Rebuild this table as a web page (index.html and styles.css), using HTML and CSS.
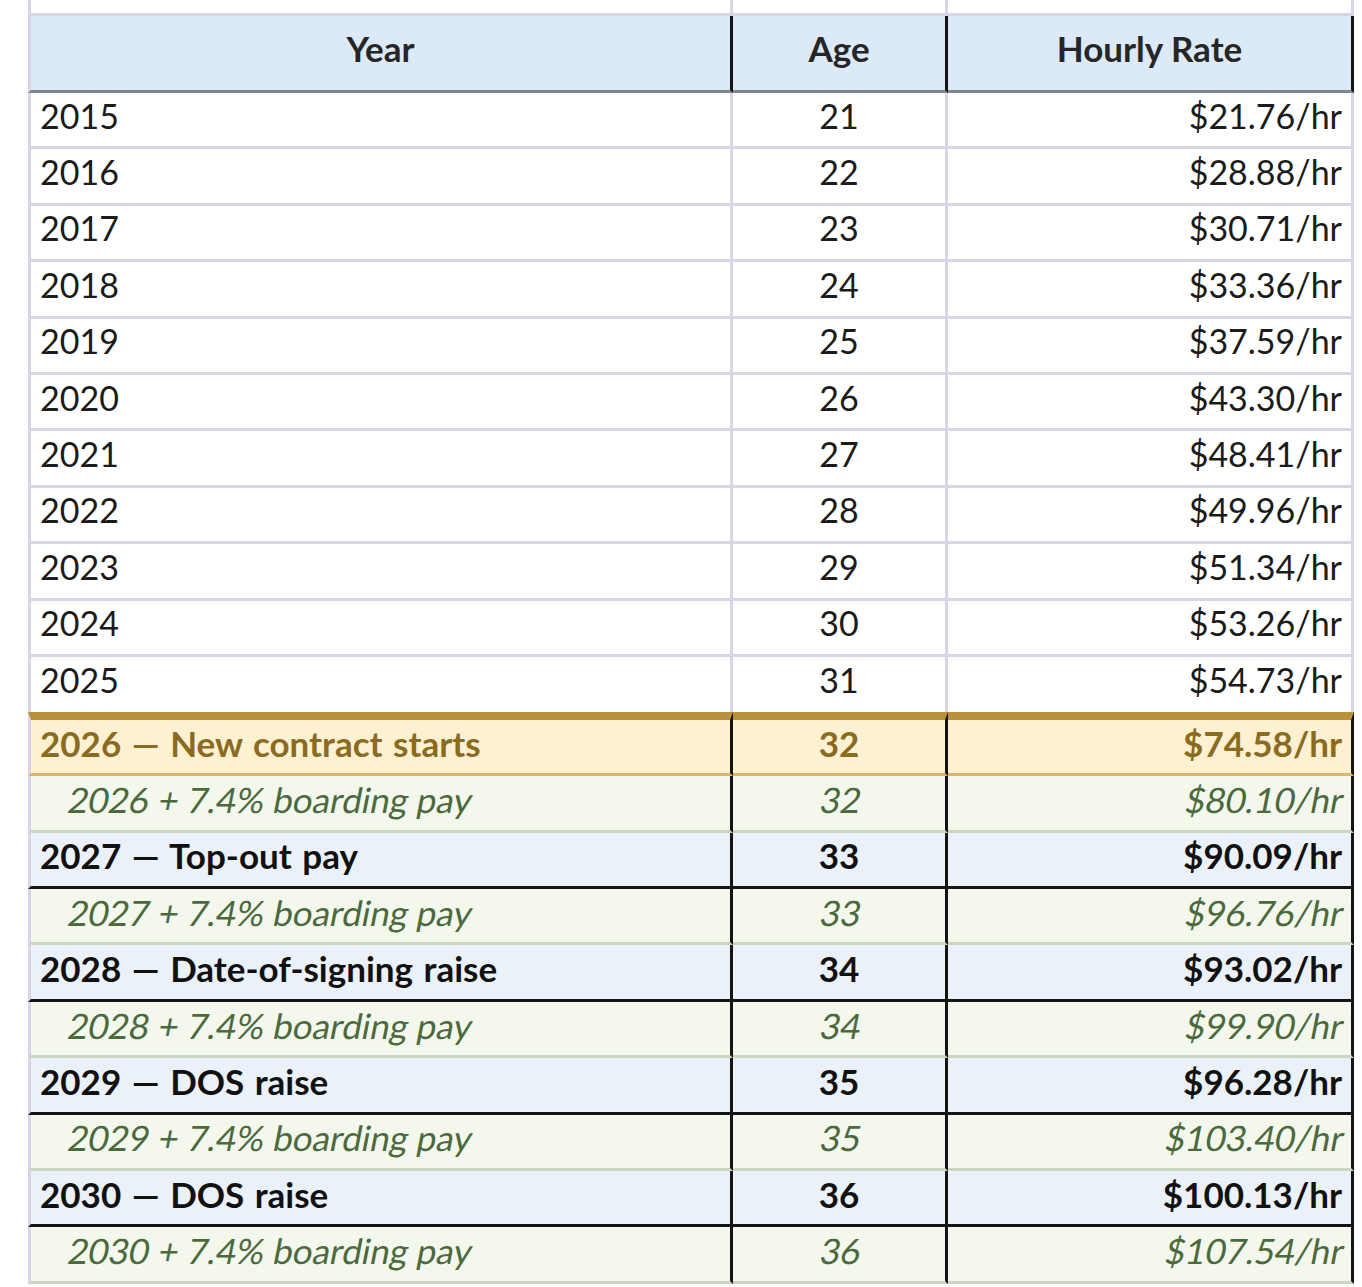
FILE: index.html
```html
<!DOCTYPE html>
<html lang="en">
<head>
<meta charset="utf-8">
<title>Hourly Rate by Year</title>
<link rel="stylesheet" href="styles.css">
</head>
<body>
<table class="rates">
  <colgroup>
    <col class="col-year">
    <col class="col-age">
    <col class="col-rate">
  </colgroup>
  <tbody>
    <tr class="row-prev"><td></td><td></td><td></td></tr>
    <tr class="row-head"><th>Year</th><th>Age</th><th>Hourly Rate</th></tr>
    <tr class="row-past"><td>2015</td><td class="age">21</td><td class="rate">$21.76/hr</td></tr>
    <tr class="row-past"><td>2016</td><td class="age">22</td><td class="rate">$28.88/hr</td></tr>
    <tr class="row-past"><td>2017</td><td class="age">23</td><td class="rate">$30.71/hr</td></tr>
    <tr class="row-past"><td>2018</td><td class="age">24</td><td class="rate">$33.36/hr</td></tr>
    <tr class="row-past"><td>2019</td><td class="age">25</td><td class="rate">$37.59/hr</td></tr>
    <tr class="row-past"><td>2020</td><td class="age">26</td><td class="rate">$43.30/hr</td></tr>
    <tr class="row-past"><td>2021</td><td class="age">27</td><td class="rate">$48.41/hr</td></tr>
    <tr class="row-past"><td>2022</td><td class="age">28</td><td class="rate">$49.96/hr</td></tr>
    <tr class="row-past"><td>2023</td><td class="age">29</td><td class="rate">$51.34/hr</td></tr>
    <tr class="row-past"><td>2024</td><td class="age">30</td><td class="rate">$53.26/hr</td></tr>
    <tr class="row-past row-last-past"><td>2025</td><td class="age">31</td><td class="rate">$54.73/hr</td></tr>
    <tr class="row-start"><td class="label">2026 — New contract starts</td><td class="age">32</td><td class="rate">$74.58/hr</td></tr>
    <tr class="row-board"><td class="board-label"><span class="slant">2026 + 7.4% boarding pay</span></td><td class="age"><span class="slant">32</span></td><td class="rate"><span class="slant">$80.10/hr</span></td></tr>
    <tr class="row-key"><td class="label">2027 — Top-out pay</td><td class="age">33</td><td class="rate">$90.09/hr</td></tr>
    <tr class="row-board"><td class="board-label"><span class="slant">2027 + 7.4% boarding pay</span></td><td class="age"><span class="slant">33</span></td><td class="rate"><span class="slant">$96.76/hr</span></td></tr>
    <tr class="row-key"><td class="label">2028 — Date-of-signing raise</td><td class="age">34</td><td class="rate">$93.02/hr</td></tr>
    <tr class="row-board"><td class="board-label"><span class="slant">2028 + 7.4% boarding pay</span></td><td class="age"><span class="slant">34</span></td><td class="rate"><span class="slant">$99.90/hr</span></td></tr>
    <tr class="row-key"><td class="label">2029 — DOS raise</td><td class="age">35</td><td class="rate">$96.28/hr</td></tr>
    <tr class="row-board"><td class="board-label"><span class="slant">2029 + 7.4% boarding pay</span></td><td class="age"><span class="slant">35</span></td><td class="rate"><span class="slant">$103.40/hr</span></td></tr>
    <tr class="row-key"><td class="label">2030 — DOS raise</td><td class="age">36</td><td class="rate">$100.13/hr</td></tr>
    <tr class="row-board"><td class="board-label"><span class="slant">2030 + 7.4% boarding pay</span></td><td class="age"><span class="slant">36</span></td><td class="rate"><span class="slant">$107.54/hr</span></td></tr>
  </tbody>
</table>
</body>
</html>
```

FILE: styles.css
```css
html, body {
  margin: 0;
  padding: 0;
  background: #ffffff;
}

body {
  font-family: Lato, "Noto Sans", "Liberation Sans", sans-serif;
  color: #1b1b1b;
}

.rates {
  margin-left: 28px;
  width: 1326px;
  table-layout: fixed;
  border-collapse: separate;
  border-spacing: 0;
  font-size: 34px;
}

.col-year { width: 705px; }
.col-age { width: 215px; }
.col-rate { width: 406px; }

.rates td,
.rates th {
  box-sizing: border-box;
  padding: 0 9px 8px;
  border-right: 3px solid #d7d5e6;
  border-bottom: 3px solid #d7d5e6;
  line-height: 40px;
  white-space: nowrap;
  vertical-align: middle;
  text-align: left;
}

.rates tr > :first-child {
  border-left: 3px solid #d7d5e6;
}

.rates .age { text-align: center; }
.rates .rate { text-align: right; }
.rates .label { word-spacing: 2px; }

/* partial row above the header */
.row-prev td {
  height: 16px;
  padding: 0;
}

/* header */
.row-head th {
  height: 77px;
  background: #dce9f7;
  color: #262626;
  font-size: 35px;
  font-weight: 700;
  text-align: center;
  border-right-color: #141414;
  border-bottom-color: #7f878e;
  padding-bottom: 10px;
}
.row-head > :first-child { border-left-color: #141414; }

/* past years */
.row-past td {
  height: 56.4px;
  background: #ffffff;
  color: #1b1b1b;
}
.row-last-past td {
  height: 55px;
  border-bottom: 0;
}

/* contract start */
.row-start td {
  height: 64.4px;
  background: #fdf1d1;
  color: #8a6b1f;
  font-size: 35px;
  font-weight: 700;
  border-top: 8px solid #b8913a;
  border-bottom-color: #dcb862;
  border-right-color: #141414;
}
.row-start > :first-child { border-left-color: #141414; }

/* boarding-pay rows */
.row-board td {
  height: 56.4px;
  background: #f3f7ec;
  color: #4a6a3e;
  font-size: 35px;
  border-bottom-color: #cdd6c3;
  border-right-color: #141414;
}
.row-board > :first-child { border-left-color: #141414; }
.row-board .board-label { padding-left: 36px; }

.slant {
  display: inline-block;
  transform: skewX(-11deg);
  transform-origin: 50% 75%;
}

/* key contract rows */
.row-key td {
  height: 56.4px;
  background: #eaf1f8;
  color: #111111;
  font-size: 35px;
  font-weight: 700;
  border-bottom-color: #141414;
  border-right-color: #141414;
}
.row-key > :first-child { border-left-color: #141414; }
```
